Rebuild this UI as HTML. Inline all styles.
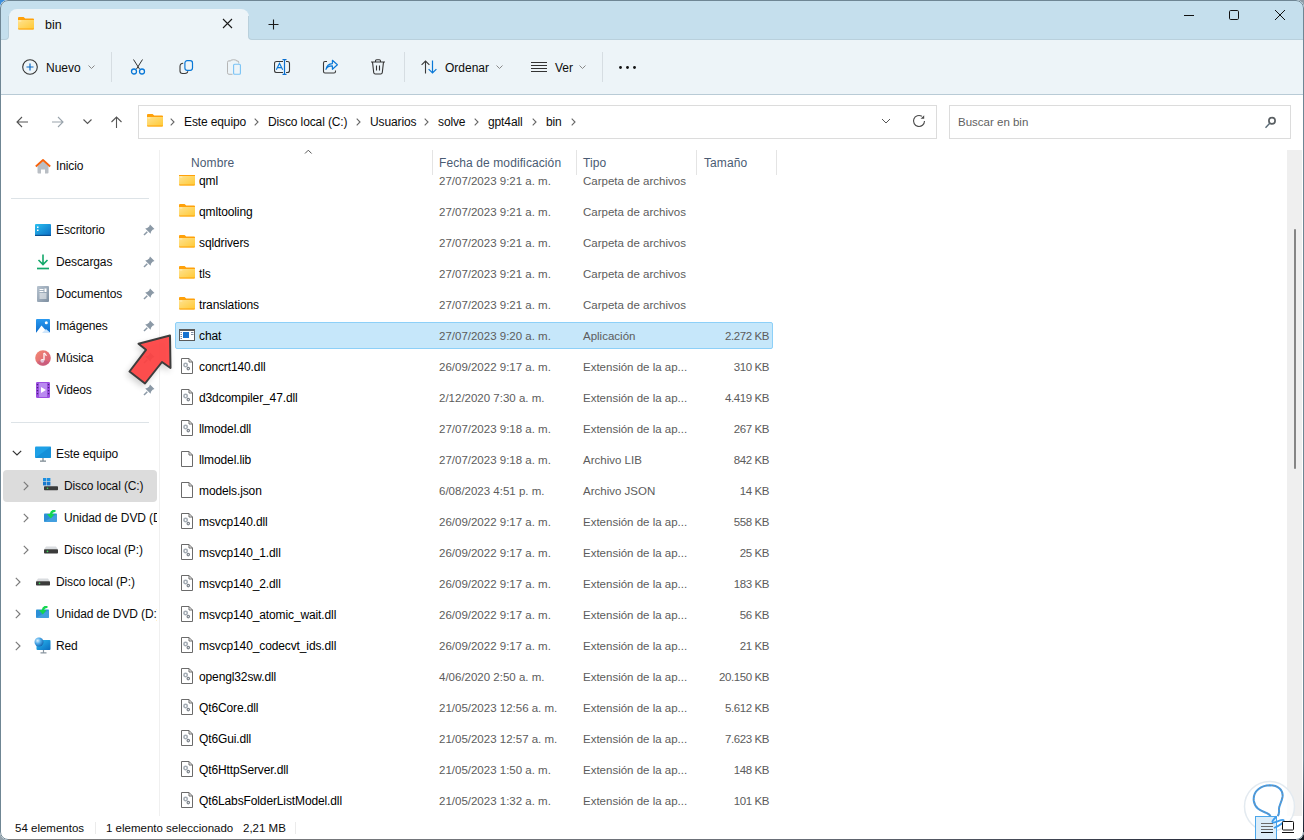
<!DOCTYPE html>
<html><head><meta charset="utf-8">
<style>
*{margin:0;padding:0;box-sizing:border-box}
html,body{width:1304px;height:840px;overflow:hidden;background:#2b4a78;font-family:"Liberation Sans",sans-serif;font-size:12px;color:#0c0c0c}
#win{position:absolute;left:0;top:0;width:1304px;height:840px;background:#fff;border-radius:8px;overflow:hidden}
#frame{position:absolute;left:0;top:0;width:1304px;height:840px;border:1px solid #6f8694;border-radius:8px;pointer-events:none}
.abs{position:absolute}
.t{position:absolute;line-height:16px;white-space:nowrap;font-size:12px;letter-spacing:-0.12px}
.gr{color:#5c5c5c;font-size:11.5px;letter-spacing:0}
.nm{color:#000}
.sz{text-align:right;letter-spacing:-0.42px}
.ic{position:absolute;line-height:0}
#title{position:absolute;left:0;top:0;width:1304px;height:40px;background:#c5dfed}
#tab{position:absolute;left:9px;top:9px;width:240px;height:32px;background:#edf4f8;border-radius:8px 8px 0 0}
#toolbar{position:absolute;left:0;top:40px;width:1304px;height:55px;background:#edf4f8;border-bottom:1px solid #b9cbd6}
.sep{position:absolute;width:1px;background:#d6dde2}
.box{position:absolute;border:1px solid #dcdcdc;background:#fff}
.hdr{color:#4a5b73;letter-spacing:0.1px}
.vdiv{position:absolute;width:1px;background:#e4e4e4}
</style></head><body>
<div class="abs" style="left:0;top:0;width:12px;height:12px;background:#3c8edb"></div>
<div class="abs" style="left:1292px;top:0;width:12px;height:12px;background:#8b9ba6"></div>
<div class="abs" style="left:0;top:828px;width:12px;height:12px;background:#94a3ad"></div>
<div class="abs" style="left:1292px;top:828px;width:12px;height:12px;background:#10151f"></div>
<div id="win">
  <div id="title"></div>
  <div class="abs" style="left:0;top:30px;width:260px;height:12px;background:#edf4f8"></div>
  <div id="tab"></div>
  <div class="abs" style="left:0;top:16px;width:9px;height:24px;background:#c5dfed;border-right:1px solid #b9d0dc;border-bottom:1px solid #b9d0dc;border-bottom-right-radius:4px"></div>
  <div class="abs" style="left:248px;top:16px;width:1056px;height:24px;background:#c5dfed;border-left:1px solid #b9d0dc;border-bottom:1px solid #b9d0dc;border-bottom-left-radius:4px"></div>
  <!-- tab contents -->
  <div class="ic" style="left:18px;top:16px">
    <svg width="16" height="14" viewBox="0 0 16 14"><path d="M0 2 Q0 1 1 1 H5.6 L7.2 2.4 H15 Q16 2.4 16 3.4 V5 H0Z" fill="#ffa10a"/><path d="M0 4 H16 V12.6 Q16 13.6 15 13.6 H1 Q0 13.6 0 12.6Z" fill="url(#fg)"/><path d="M0 12.6 H16 Q16 13.6 15 13.6 H1 Q0 13.6 0 12.6Z" fill="#ffa10a"/><rect x="0.8" y="4.6" width="2.5" height="0.8" fill="#fff3c8"/></svg>
  </div>
  <div class="t" style="left:45px;top:17px;font-size:12.5px;letter-spacing:0">bin</div>
  <svg class="abs" style="left:222px;top:18px" width="11" height="11" viewBox="0 0 11 11"><path d="M1 1L10 10M10 1L1 10" stroke="#1a1a1a" stroke-width="1.1"/></svg>
  <svg class="abs" style="left:268px;top:19px" width="11" height="11" viewBox="0 0 11 11"><path d="M5.5 0.5V10.5M0.5 5.5H10.5" stroke="#1a1a1a" stroke-width="1.1"/></svg>
  <!-- window controls -->
  <svg class="abs" style="left:1183px;top:14px" width="12" height="3"><path d="M1 1.5H11" stroke="#111" stroke-width="1"/></svg>
  <svg class="abs" style="left:1228px;top:9px" width="12" height="12"><rect x="1.5" y="1.5" width="9" height="9" rx="1.2" fill="none" stroke="#111" stroke-width="1"/></svg>
  <svg class="abs" style="left:1274px;top:9px" width="12" height="12"><path d="M1 1L11 11M11 1L1 11" stroke="#111" stroke-width="1"/></svg>

  <div id="toolbar"></div>
  
  <svg class="abs" style="left:22px;top:59px" width="16" height="16" viewBox="0 0 16 16"><circle cx="8" cy="8" r="7.3" fill="none" stroke="#333" stroke-width="1.1"/><path d="M8 4.5V11.5M4.5 8H11.5" stroke="#0a68c4" stroke-width="1.2"/></svg>
  <div class="t" style="left:46px;top:60px;letter-spacing:0">Nuevo</div>
  <svg class="abs" style="left:88px;top:65px" width="7" height="5"><path d="M0.5 0.5L3.5 3.5L6.5 0.5" stroke="#888" fill="none" stroke-width="1"/></svg>
  <div class="sep" style="left:111px;top:52px;height:30px"></div>
  <!-- cut -->
  <svg class="abs" style="left:130px;top:59px" width="16" height="16" viewBox="0 0 16 16"><path d="M3.5 0.5L9.5 10M12.5 0.5L6.5 10" stroke="#333" stroke-width="1" fill="none"/><circle cx="4" cy="12.5" r="2.5" fill="none" stroke="#0a78d7" stroke-width="1.3"/><circle cx="12" cy="12.5" r="2.5" fill="none" stroke="#0a78d7" stroke-width="1.3"/></svg>
  <!-- copy -->
  <svg class="abs" style="left:178px;top:59px" width="16" height="16" viewBox="0 0 16 16"><path d="M5.2 4.3Q2 4.5 2 7.5V12Q2 14.5 4.5 14.5H7Q9.5 14.5 9.8 12.3" fill="none" stroke="#3a3a3a" stroke-width="1.1"/><rect x="6.9" y="1.7" width="7.6" height="9.6" rx="2.2" fill="none" stroke="#0a78d7" stroke-width="1.2"/></svg>
  <!-- paste (disabled) -->
  <svg class="abs" style="left:226px;top:59px" width="16" height="16" viewBox="0 0 16 16"><path d="M4 1.8H3Q1.5 1.8 1.5 3.3V13.8Q1.5 15.3 3 15.3H6.5" fill="none" stroke="#b5b5b5" stroke-width="1"/><path d="M4 2.6Q4 0.7 7.6 0.7Q11.2 0.7 11.2 2.6" fill="none" stroke="#b5b5b5" stroke-width="1"/><path d="M11.2 1.8Q12.7 1.8 12.7 3.3V4.5" fill="none" stroke="#b5b5b5" stroke-width="1"/><rect x="7.6" y="5.2" width="6.8" height="10.1" rx="1" fill="none" stroke="#79c2f5" stroke-width="1.1"/></svg>
  <!-- rename -->
  <svg class="abs" style="left:274px;top:59px" width="17" height="16" viewBox="0 0 17 16"><path d="M9 2.5H2.5Q0.5 2.5 0.5 4.5V11.5Q0.5 13.5 2.5 13.5H9M12 2.5H13.5Q15.5 2.5 15.5 4.5V11.5Q15.5 13.5 13.5 13.5H12" fill="none" stroke="#3a3a3a" stroke-width="1.1"/><path d="M10.5 0.6V15.4M8.5 0.6H12.5M8.5 15.4H12.5" stroke="#0a6fd0" stroke-width="1.2" fill="none"/><path d="M2.3 10.8L5.5 4.3L8.7 10.8M3.4 8.6H7.6" stroke="#0a78d7" stroke-width="1.15" fill="none"/></svg>
  <!-- share -->
  <svg class="abs" style="left:322px;top:59px" width="17" height="16" viewBox="0 0 17 16"><path d="M5 2.5H3Q1.5 2.5 1.5 4V12.5Q1.5 14 3 14H12Q13.5 14 13.5 12.5V11.5" fill="none" stroke="#3a3a3a" stroke-width="1.1"/><path d="M4 10.4C5 7.6 7 6.9 10.4 6.9V10.3L15.4 5.8L10.4 1.3V4.6C6.5 4.8 4.5 7.5 4 10.4Z" fill="none" stroke="#0a78d7" stroke-width="1.15" stroke-linejoin="round"/></svg>
  <!-- delete -->
  <svg class="abs" style="left:370px;top:59px" width="16" height="16" viewBox="0 0 16 16"><path d="M1 3H15M5.5 3V2Q5.5 0.8 6.7 0.8H9.3Q10.5 0.8 10.5 2V3M2.5 3L3.7 13.5Q3.9 15 5.3 15H10.7Q12.1 15 12.3 13.5L13.5 3M6.5 6.5V11.5M9.5 6.5V11.5" fill="none" stroke="#333" stroke-width="1.1"/></svg>
  <div class="sep" style="left:404px;top:52px;height:30px"></div>
  <!-- sort -->
  <svg class="abs" style="left:421px;top:60px" width="17" height="14" viewBox="0 0 17 14"><path d="M4.5 13.5V1M0.6 4.9L4.5 1L8.4 4.9" fill="none" stroke="#3a3a3a" stroke-width="1.1"/><path d="M11.5 0.5V13M7.6 9.1L11.5 13L15.4 9.1" fill="none" stroke="#0a78d7" stroke-width="1.2"/></svg>
  <div class="t" style="left:445px;top:60px;letter-spacing:0">Ordenar</div>
  <svg class="abs" style="left:496px;top:65px" width="7" height="5"><path d="M0.5 0.5L3.5 3.5L6.5 0.5" stroke="#888" fill="none" stroke-width="1"/></svg>
  <!-- view -->
  <svg class="abs" style="left:531px;top:62px" width="16" height="10" viewBox="0 0 16 10"><path d="M0 0.5H16M0 3.5H16M0 6.5H16M0 9.5H16" stroke="#333" stroke-width="1"/></svg>
  <div class="t" style="left:555px;top:60px;letter-spacing:0">Ver</div>
  <svg class="abs" style="left:579px;top:65px" width="7" height="5"><path d="M0.5 0.5L3.5 3.5L6.5 0.5" stroke="#888" fill="none" stroke-width="1"/></svg>
  <div class="sep" style="left:602px;top:52px;height:30px"></div>
  <svg class="abs" style="left:619px;top:66px" width="17" height="3"><circle cx="1.5" cy="1.5" r="1.4" fill="#111"/><circle cx="8.5" cy="1.5" r="1.4" fill="#111"/><circle cx="15.5" cy="1.5" r="1.4" fill="#111"/></svg>


  <!-- address row -->
  
  <svg class="abs" style="left:16px;top:116px" width="13" height="12" viewBox="0 0 13 12"><path d="M12 6H1M6 1L1 6L6 11" fill="none" stroke="#555" stroke-width="1.1"/></svg>
  <svg class="abs" style="left:51px;top:116px" width="13" height="12" viewBox="0 0 13 12"><path d="M1 6H12M7 1L12 6L7 11" fill="none" stroke="#9aa4ac" stroke-width="1.1"/></svg>
  <svg class="abs" style="left:83px;top:119px" width="9" height="6" viewBox="0 0 9 6"><path d="M0.5 0.5L4.5 4.5L8.5 0.5" fill="none" stroke="#555" stroke-width="1.1"/></svg>
  <svg class="abs" style="left:111px;top:116px" width="11" height="12" viewBox="0 0 11 12"><path d="M5.5 12V1M0.5 6L5.5 1L10.5 6" fill="none" stroke="#555" stroke-width="1.1"/></svg>
  <div class="box" style="left:138px;top:105px;width:799px;height:34px"></div>
  <div class="ic" style="left:147px;top:113px">
    <svg width="16" height="14" viewBox="0 0 16 14"><path d="M0 2 Q0 1 1 1 H5.6 L7.2 2.4 H15 Q16 2.4 16 3.4 V5 H0Z" fill="#ffa10a"/><path d="M0 4 H16 V12.6 Q16 13.6 15 13.6 H1 Q0 13.6 0 12.6Z" fill="url(#fg)"/><path d="M0 12.6 H16 Q16 13.6 15 13.6 H1 Q0 13.6 0 12.6Z" fill="#ffa10a"/><rect x="0.8" y="4.6" width="2.5" height="0.8" fill="#fff3c8"/></svg>
  </div>
  <svg class="abs" style="left:170px;top:118px" width="5" height="8" viewBox="0 0 5 8"><path d="M0.7 0.7L4 4L0.7 7.3" fill="none" stroke="#666" stroke-width="1.1"/></svg>
<svg class="abs" style="left:254px;top:118px" width="5" height="8" viewBox="0 0 5 8"><path d="M0.7 0.7L4 4L0.7 7.3" fill="none" stroke="#666" stroke-width="1.1"/></svg>
<svg class="abs" style="left:356px;top:118px" width="5" height="8" viewBox="0 0 5 8"><path d="M0.7 0.7L4 4L0.7 7.3" fill="none" stroke="#666" stroke-width="1.1"/></svg>
<svg class="abs" style="left:424px;top:118px" width="5" height="8" viewBox="0 0 5 8"><path d="M0.7 0.7L4 4L0.7 7.3" fill="none" stroke="#666" stroke-width="1.1"/></svg>
<svg class="abs" style="left:474px;top:118px" width="5" height="8" viewBox="0 0 5 8"><path d="M0.7 0.7L4 4L0.7 7.3" fill="none" stroke="#666" stroke-width="1.1"/></svg>
<svg class="abs" style="left:532px;top:118px" width="5" height="8" viewBox="0 0 5 8"><path d="M0.7 0.7L4 4L0.7 7.3" fill="none" stroke="#666" stroke-width="1.1"/></svg>
<svg class="abs" style="left:571px;top:118px" width="5" height="8" viewBox="0 0 5 8"><path d="M0.7 0.7L4 4L0.7 7.3" fill="none" stroke="#666" stroke-width="1.1"/></svg>
<div class="t" style="left:184px;top:114px">Este equipo</div>
<div class="t" style="left:268px;top:114px">Disco local (C:)</div>
<div class="t" style="left:370px;top:114px">Usuarios</div>
<div class="t" style="left:438px;top:114px">solve</div>
<div class="t" style="left:488px;top:114px">gpt4all</div>
<div class="t" style="left:546px;top:114px">bin</div>
  <svg class="abs" style="left:881px;top:118px" width="10" height="6" viewBox="0 0 10 6"><path d="M1 1L5 5L9 1" fill="none" stroke="#555" stroke-width="1"/></svg>
  <svg class="abs" style="left:912px;top:114px" width="14" height="14" viewBox="0 0 14 14"><path d="M12.5 7A5.5 5.5 0 1 1 9.9 2.3" fill="none" stroke="#4a4a4a" stroke-width="1.1"/><path d="M8.6 4.8H12.2V1.2Z" fill="#4a4a4a"/></svg>
  <div class="box" style="left:949px;top:105px;width:342px;height:34px"></div>
  <div class="t" style="left:958px;top:114px;color:#5f5f5f;font-size:11.5px;letter-spacing:0">Buscar en bin</div>
  <svg class="abs" style="left:1264px;top:116px" width="13" height="13" viewBox="0 0 13 13"><circle cx="8" cy="4.8" r="3.1" fill="none" stroke="#5a5f63" stroke-width="1.7"/><path d="M5.8 7.2L1.5 11.7" stroke="#5a6a76" stroke-width="1.4"/></svg>


  <!-- nav pane -->
  <svg class="abs" style="left:35px;top:159px" width="16" height="15" viewBox="0 0 16 15"><path d="M2.5 7V13.5Q2.5 14.5 3.5 14.5H6V10.5H10V14.5H12.5Q13.5 14.5 13.5 13.5V7L8 2Z" fill="#b9bec4"/><path d="M0.8 7.5L8 1L15.2 7.5" fill="none" stroke="#f7630c" stroke-width="1.8" stroke-linejoin="round"/></svg>
<div class="t" style="left:56px;top:158px">Inicio</div>
<div class="abs" style="left:11px;top:198px;width:138px;height:1px;background:#dde3e7"></div>
<div class="ic" style="left:35px;top:224px"><svg width="16" height="12" viewBox="0 0 16 12"><defs><linearGradient id="dk" x1="0" y1="0" x2="1" y2="1"><stop offset="0" stop-color="#2bc0f0"/><stop offset="1" stop-color="#0b6cc4"/></linearGradient></defs><rect x="0" y="0" width="16" height="12" rx="1" fill="url(#dk)"/><rect x="2" y="2.5" width="1.5" height="1.5" fill="#fff"/><rect x="2" y="5.5" width="1.5" height="1.5" fill="#fff"/><rect x="0" y="10.8" width="16" height="1.2" fill="#0a4f92"/></svg></div>
<div class="t" style="left:56px;top:222px">Escritorio</div>
<svg class="abs" style="left:143px;top:224px" width="12" height="12" viewBox="0 0 12 12"><path d="M7 0.5L11.5 5L9.6 5.8L8 7.8L7.6 9.8L2.2 4.4L4.2 4L6.2 2.4Z" fill="#8b99a6"/><path d="M4.3 7.7L1 11" stroke="#8b99a6" stroke-width="1.5"/></svg>
<div class="ic" style="left:36px;top:254px"><svg width="14" height="16" viewBox="0 0 14 16"><path d="M7 0.5V10.5M2.5 6L7 10.5L11.5 6" fill="none" stroke="#13a86a" stroke-width="1.6"/><path d="M1 14.5H13" stroke="#13a86a" stroke-width="1.7"/></svg></div>
<div class="t" style="left:56px;top:254px">Descargas</div>
<svg class="abs" style="left:143px;top:256px" width="12" height="12" viewBox="0 0 12 12"><path d="M7 0.5L11.5 5L9.6 5.8L8 7.8L7.6 9.8L2.2 4.4L4.2 4L6.2 2.4Z" fill="#8b99a6"/><path d="M4.3 7.7L1 11" stroke="#8b99a6" stroke-width="1.5"/></svg>
<div class="ic" style="left:37px;top:286px"><svg width="12" height="16" viewBox="0 0 12 16"><defs><linearGradient id="dc" x1="0" y1="0" x2="1" y2="1"><stop offset="0" stop-color="#b8c4d0"/><stop offset="1" stop-color="#7d8ea0"/></linearGradient></defs><rect x="0" y="0" width="12" height="16" rx="1" fill="url(#dc)"/><path d="M2.5 3.5H6.5M2.5 5.5H6.5M2.5 8H9.5M2.5 10H9.5M2.5 12H9.5" stroke="#fff" stroke-width="1"/><rect x="7.5" y="2.5" width="2" height="3.5" fill="#fff"/></svg></div>
<div class="t" style="left:56px;top:286px">Documentos</div>
<svg class="abs" style="left:143px;top:288px" width="12" height="12" viewBox="0 0 12 12"><path d="M7 0.5L11.5 5L9.6 5.8L8 7.8L7.6 9.8L2.2 4.4L4.2 4L6.2 2.4Z" fill="#8b99a6"/><path d="M4.3 7.7L1 11" stroke="#8b99a6" stroke-width="1.5"/></svg>
<div class="ic" style="left:36px;top:319px"><svg width="14" height="14" viewBox="0 0 14 14"><defs><linearGradient id="im" x1="0" y1="0" x2="0" y2="1"><stop offset="0" stop-color="#2a9af0"/><stop offset="1" stop-color="#0c6ccc"/></linearGradient></defs><rect x="0" y="0" width="14" height="14" rx="1" fill="url(#im)"/><path d="M0 14L5.5 6.5L12 14Z" fill="#fff"/><path d="M6 14L10 10L14 13.5V14Z" fill="#cfe6fb"/><circle cx="10.3" cy="3.7" r="1.5" fill="#fff"/></svg></div>
<div class="t" style="left:56px;top:318px">Imágenes</div>
<svg class="abs" style="left:143px;top:320px" width="12" height="12" viewBox="0 0 12 12"><path d="M7 0.5L11.5 5L9.6 5.8L8 7.8L7.6 9.8L2.2 4.4L4.2 4L6.2 2.4Z" fill="#8b99a6"/><path d="M4.3 7.7L1 11" stroke="#8b99a6" stroke-width="1.5"/></svg>
<div class="ic" style="left:35px;top:350px"><svg width="16" height="16" viewBox="0 0 16 16"><defs><linearGradient id="mu" x1="0" y1="0" x2="1" y2="1"><stop offset="0" stop-color="#f48a72"/><stop offset="1" stop-color="#d45a78"/></linearGradient></defs><circle cx="8" cy="8" r="7.8" fill="url(#mu)"/><path d="M9 3V10.5" stroke="#fff" stroke-width="1.3"/><circle cx="7.3" cy="10.8" r="1.9" fill="#fff"/><path d="M9 3Q11 4 11.3 6" stroke="#fff" stroke-width="1.1" fill="none"/><path d="M2 12Q8 8 14 12Q11 16 8 15.8Q4 15.5 2 12Z" fill="#a94a8a" opacity="0.35"/></svg></div>
<div class="t" style="left:56px;top:350px">Música</div>
<svg class="abs" style="left:143px;top:352px" width="12" height="12" viewBox="0 0 12 12"><path d="M7 0.5L11.5 5L9.6 5.8L8 7.8L7.6 9.8L2.2 4.4L4.2 4L6.2 2.4Z" fill="#8b99a6"/><path d="M4.3 7.7L1 11" stroke="#8b99a6" stroke-width="1.5"/></svg>
<div class="ic" style="left:36px;top:382px"><svg width="14" height="16" viewBox="0 0 14 16"><rect x="0" y="0" width="14" height="16" rx="1.2" fill="#9b4fe0"/><rect x="3" y="1" width="8" height="14" fill="#b98af0"/><path d="M5 5V11L10 8Z" fill="#fff"/><path d="M1.5 2V14M12.5 2V14" stroke="#4a1f80" stroke-width="1.3" stroke-dasharray="1.3 1.7"/></svg></div>
<div class="t" style="left:56px;top:382px">Videos</div>
<svg class="abs" style="left:143px;top:384px" width="12" height="12" viewBox="0 0 12 12"><path d="M7 0.5L11.5 5L9.6 5.8L8 7.8L7.6 9.8L2.2 4.4L4.2 4L6.2 2.4Z" fill="#8b99a6"/><path d="M4.3 7.7L1 11" stroke="#8b99a6" stroke-width="1.5"/></svg>
<div class="abs" style="left:11px;top:422px;width:138px;height:1px;background:#dde3e7"></div>
<div class="abs" style="left:3px;top:470px;width:154px;height:32px;background:#dcdcdc;border-radius:4px"></div>
<svg class="abs" style="left:12px;top:450px" width="10" height="6" viewBox="0 0 10 6"><path d="M0.8 0.8L5 5L9.2 0.8" fill="none" stroke="#333" stroke-width="1.2"/></svg>
<div class="ic" style="left:35px;top:446px"><svg width="16" height="16" viewBox="0 0 16 16"><rect x="0" y="0.5" width="16" height="11.5" rx="1" fill="#1ea0e6"/><path d="M0 12L16 0.5V12Z" fill="#1186d0" opacity="0.6"/><path d="M8 12V15M5 15.2H11" stroke="#7a8790" stroke-width="1.2"/></svg></div>
<div class="t" style="left:56px;top:446px">Este equipo</div>
<svg class="abs" style="left:23px;top:481px" width="6" height="10" viewBox="0 0 6 10"><path d="M0.8 0.8L5 5L0.8 9.2" fill="none" stroke="#7a7a7a" stroke-width="1.15"/></svg>
<div class="ic" style="left:43px;top:478px"><svg width="16" height="13" viewBox="0 0 16 13"><path d="M3 5.5H13L15 8.5H1Z" fill="#d9dcdf"/><rect x="1" y="8.3" width="14" height="4" rx="0.8" fill="#3b3b3b"/><circle cx="4.5" cy="10.3" r="0.8" fill="#3cdc5a"/><rect x="0" y="0" width="3.4" height="3.4" fill="#1c8fe0"/><rect x="4" y="0" width="3.4" height="3.4" fill="#1c8fe0"/><rect x="0" y="4" width="3.4" height="3.4" fill="#1878cf"/><rect x="4" y="4" width="3.4" height="3.4" fill="#1878cf"/></svg></div>
<div class="t" style="left:64px;top:478px;width:93px;overflow:hidden">Disco local (C:)</div>
<svg class="abs" style="left:23px;top:513px" width="6" height="10" viewBox="0 0 6 10"><path d="M0.8 0.8L5 5L0.8 9.2" fill="none" stroke="#7a7a7a" stroke-width="1.15"/></svg>
<div class="ic" style="left:44px;top:510px"><svg width="13" height="12" viewBox="0 0 13 12"><rect x="0" y="3.5" width="13" height="8.5" rx="0.8" fill="#2b8fd6"/><path d="M0 12L13 4V12Z" fill="#5ab0e8" opacity="0.5"/><path d="M11.5 0.8Q7.5 0.5 6.8 4.5" fill="none" stroke="#14d650" stroke-width="2.4"/><path d="M3 4H10.5L6.8 8.5Z" fill="#14d650"/></svg></div>
<div class="t" style="left:64px;top:510px;width:93px;overflow:hidden">Unidad de DVD (D:)</div>
<svg class="abs" style="left:23px;top:545px" width="6" height="10" viewBox="0 0 6 10"><path d="M0.8 0.8L5 5L0.8 9.2" fill="none" stroke="#7a7a7a" stroke-width="1.15"/></svg>
<div class="ic" style="left:44px;top:546px"><svg width="14" height="8" viewBox="0 0 14 8"><path d="M2 0.5H12L14 3.5H0Z" fill="#d9dcdf"/><rect x="0" y="3.3" width="14" height="4.2" rx="0.8" fill="#3b3b3b"/><circle cx="3.5" cy="5.4" r="0.8" fill="#3cdc5a"/></svg></div>
<div class="t" style="left:64px;top:542px;width:93px;overflow:hidden">Disco local (P:)</div>
<svg class="abs" style="left:15px;top:577px" width="6" height="10" viewBox="0 0 6 10"><path d="M0.8 0.8L5 5L0.8 9.2" fill="none" stroke="#7a7a7a" stroke-width="1.15"/></svg>
<div class="ic" style="left:36px;top:578px"><svg width="14" height="8" viewBox="0 0 14 8"><path d="M2 0.5H12L14 3.5H0Z" fill="#d9dcdf"/><rect x="0" y="3.3" width="14" height="4.2" rx="0.8" fill="#3b3b3b"/><circle cx="3.5" cy="5.4" r="0.8" fill="#3cdc5a"/></svg></div>
<div class="t" style="left:56px;top:574px;width:101px;overflow:hidden">Disco local (P:)</div>
<svg class="abs" style="left:15px;top:609px" width="6" height="10" viewBox="0 0 6 10"><path d="M0.8 0.8L5 5L0.8 9.2" fill="none" stroke="#7a7a7a" stroke-width="1.15"/></svg>
<div class="ic" style="left:36px;top:606px"><svg width="13" height="12" viewBox="0 0 13 12"><rect x="0" y="3.5" width="13" height="8.5" rx="0.8" fill="#2b8fd6"/><path d="M0 12L13 4V12Z" fill="#5ab0e8" opacity="0.5"/><path d="M11.5 0.8Q7.5 0.5 6.8 4.5" fill="none" stroke="#14d650" stroke-width="2.4"/><path d="M3 4H10.5L6.8 8.5Z" fill="#14d650"/></svg></div>
<div class="t" style="left:56px;top:606px;width:101px;overflow:hidden">Unidad de DVD (D:)</div>
<svg class="abs" style="left:15px;top:641px" width="6" height="10" viewBox="0 0 6 10"><path d="M0.8 0.8L5 5L0.8 9.2" fill="none" stroke="#7a7a7a" stroke-width="1.15"/></svg>
<div class="ic" style="left:34px;top:637px"><svg width="17" height="17" viewBox="0 0 17 17"><defs><linearGradient id="nm" x1="0" y1="0" x2="1" y2="1"><stop offset="0" stop-color="#2bbdf0"/><stop offset="1" stop-color="#0a6cc0"/></linearGradient><radialGradient id="gl" cx="0.35" cy="0.35" r="0.7"><stop offset="0" stop-color="#d8f0ff"/><stop offset="0.5" stop-color="#4aa8e8"/><stop offset="1" stop-color="#1766b0"/></radialGradient></defs><rect x="2.5" y="3" width="14" height="10" rx="1" fill="url(#nm)"/><path d="M9.5 13V15.5M6.5 15.8H12.5" stroke="#8a96a0" stroke-width="1.2"/><circle cx="5" cy="5" r="4.5" fill="url(#gl)"/></svg></div>
<div class="t" style="left:56px;top:638px;width:101px;overflow:hidden">Red</div>
  <div class="vdiv" style="left:159px;top:150px;height:666px;background:#f0f0f0"></div>

  <!-- header -->
  <div class="t hdr" style="left:191px;top:155px">Nombre</div>
  <svg class="abs" style="left:303px;top:149px" width="10" height="6"><path d="M2 4.5L5.3 1.2L8.6 4.5" stroke="#555" fill="none" stroke-width="1"/></svg>
  <div class="vdiv" style="left:432px;top:150px;height:25px"></div>
  <div class="t hdr" style="left:439px;top:155px">Fecha de modificación</div>
  <div class="vdiv" style="left:576px;top:150px;height:25px"></div>
  <div class="t hdr" style="left:583px;top:155px">Tipo</div>
  <div class="vdiv" style="left:696px;top:150px;height:25px"></div>
  <div class="t hdr" style="left:704px;top:155px">Tamaño</div>
  <div class="vdiv" style="left:776px;top:150px;height:25px"></div>

  <!-- list -->
  <div class="abs" style="left:160px;top:175px;width:1126px;height:642px;overflow:hidden">
    <div class="abs" style="left:-160px;top:-175px;width:1304px;height:840px">
      <div class="abs" style="left:175px;top:322px;width:598px;height:27px;background:#c6e7fa;border:1px solid #8dd0f8;border-radius:2px"></div>
      <div class="ic" style="left:179px;top:172px"><svg width="16" height="14" viewBox="0 0 16 14"><defs><linearGradient id="fg" x1="0" y1="0" x2="1" y2="1"><stop offset="0" stop-color="#ffe28f"/><stop offset="1" stop-color="#ffc933"/></linearGradient></defs><path d="M0 2 Q0 1 1 1 H5.6 L7.2 2.4 H15 Q16 2.4 16 3.4 V5 H0Z" fill="#ffa10a"/><path d="M0 4 H16 V12.6 Q16 13.6 15 13.6 H1 Q0 13.6 0 12.6Z" fill="url(#fg)"/><path d="M0 12.6 H16 Q16 13.6 15 13.6 H1 Q0 13.6 0 12.6Z" fill="#ffa10a"/><rect x="0.8" y="4.6" width="2.5" height="0.8" fill="#fff3c8"/></svg></div>
<div class="t nm" style="left:199px;top:173px">qml</div>
<div class="t gr" style="left:439px;top:173px">27/07/2023 9:21 a. m.</div>
<div class="t gr" style="left:583px;top:173px">Carpeta de archivos</div>
<div class="ic" style="left:179px;top:203px"><svg width="16" height="14" viewBox="0 0 16 14"><defs><linearGradient id="fg" x1="0" y1="0" x2="1" y2="1"><stop offset="0" stop-color="#ffe28f"/><stop offset="1" stop-color="#ffc933"/></linearGradient></defs><path d="M0 2 Q0 1 1 1 H5.6 L7.2 2.4 H15 Q16 2.4 16 3.4 V5 H0Z" fill="#ffa10a"/><path d="M0 4 H16 V12.6 Q16 13.6 15 13.6 H1 Q0 13.6 0 12.6Z" fill="url(#fg)"/><path d="M0 12.6 H16 Q16 13.6 15 13.6 H1 Q0 13.6 0 12.6Z" fill="#ffa10a"/><rect x="0.8" y="4.6" width="2.5" height="0.8" fill="#fff3c8"/></svg></div>
<div class="t nm" style="left:199px;top:204px">qmltooling</div>
<div class="t gr" style="left:439px;top:204px">27/07/2023 9:21 a. m.</div>
<div class="t gr" style="left:583px;top:204px">Carpeta de archivos</div>
<div class="ic" style="left:179px;top:234px"><svg width="16" height="14" viewBox="0 0 16 14"><defs><linearGradient id="fg" x1="0" y1="0" x2="1" y2="1"><stop offset="0" stop-color="#ffe28f"/><stop offset="1" stop-color="#ffc933"/></linearGradient></defs><path d="M0 2 Q0 1 1 1 H5.6 L7.2 2.4 H15 Q16 2.4 16 3.4 V5 H0Z" fill="#ffa10a"/><path d="M0 4 H16 V12.6 Q16 13.6 15 13.6 H1 Q0 13.6 0 12.6Z" fill="url(#fg)"/><path d="M0 12.6 H16 Q16 13.6 15 13.6 H1 Q0 13.6 0 12.6Z" fill="#ffa10a"/><rect x="0.8" y="4.6" width="2.5" height="0.8" fill="#fff3c8"/></svg></div>
<div class="t nm" style="left:199px;top:235px">sqldrivers</div>
<div class="t gr" style="left:439px;top:235px">27/07/2023 9:21 a. m.</div>
<div class="t gr" style="left:583px;top:235px">Carpeta de archivos</div>
<div class="ic" style="left:179px;top:265px"><svg width="16" height="14" viewBox="0 0 16 14"><defs><linearGradient id="fg" x1="0" y1="0" x2="1" y2="1"><stop offset="0" stop-color="#ffe28f"/><stop offset="1" stop-color="#ffc933"/></linearGradient></defs><path d="M0 2 Q0 1 1 1 H5.6 L7.2 2.4 H15 Q16 2.4 16 3.4 V5 H0Z" fill="#ffa10a"/><path d="M0 4 H16 V12.6 Q16 13.6 15 13.6 H1 Q0 13.6 0 12.6Z" fill="url(#fg)"/><path d="M0 12.6 H16 Q16 13.6 15 13.6 H1 Q0 13.6 0 12.6Z" fill="#ffa10a"/><rect x="0.8" y="4.6" width="2.5" height="0.8" fill="#fff3c8"/></svg></div>
<div class="t nm" style="left:199px;top:266px">tls</div>
<div class="t gr" style="left:439px;top:266px">27/07/2023 9:21 a. m.</div>
<div class="t gr" style="left:583px;top:266px">Carpeta de archivos</div>
<div class="ic" style="left:179px;top:296px"><svg width="16" height="14" viewBox="0 0 16 14"><defs><linearGradient id="fg" x1="0" y1="0" x2="1" y2="1"><stop offset="0" stop-color="#ffe28f"/><stop offset="1" stop-color="#ffc933"/></linearGradient></defs><path d="M0 2 Q0 1 1 1 H5.6 L7.2 2.4 H15 Q16 2.4 16 3.4 V5 H0Z" fill="#ffa10a"/><path d="M0 4 H16 V12.6 Q16 13.6 15 13.6 H1 Q0 13.6 0 12.6Z" fill="url(#fg)"/><path d="M0 12.6 H16 Q16 13.6 15 13.6 H1 Q0 13.6 0 12.6Z" fill="#ffa10a"/><rect x="0.8" y="4.6" width="2.5" height="0.8" fill="#fff3c8"/></svg></div>
<div class="t nm" style="left:199px;top:297px">translations</div>
<div class="t gr" style="left:439px;top:297px">27/07/2023 9:21 a. m.</div>
<div class="t gr" style="left:583px;top:297px">Carpeta de archivos</div>
<div class="ic" style="left:179px;top:329px"><svg width="16" height="12" viewBox="0 0 16 12"><rect x="0.5" y="0.5" width="15" height="11" fill="#fff" stroke="#5a5a5a"/><rect x="0.5" y="0.5" width="15" height="1.5" fill="#5a5a5a"/><rect x="4" y="3" width="6" height="6" fill="#1572d0"/><path d="M1.5 3.5h1.5M1.5 5.5h1.5M1.5 7.5h1.5M1.5 9.5h1.5M12 3.5h2.5M12 5.5h2.5" stroke="#7b8aa0" stroke-width="1"/></svg></div>
<div class="t nm" style="left:199px;top:328px">chat</div>
<div class="t gr" style="left:439px;top:328px">27/07/2023 9:20 a. m.</div>
<div class="t gr" style="left:583px;top:328px">Aplicación</div>
<div class="t gr sz" style="right:535px;top:328px">2.272 KB</div>
<div class="ic" style="left:181px;top:358px"><svg width="13" height="16" viewBox="0 0 13 16"><path d="M0.5 0.5 H8 L11.5 4 V15.5 H0.5Z" fill="#fff" stroke="#6b6b6b"/><path d="M8 0.5 V4 H11.5" fill="none" stroke="#6b6b6b"/><circle cx="4.6" cy="7" r="1.7" fill="none" stroke="#a3abb3" stroke-width="1.5"/><circle cx="7.3" cy="10.6" r="1.2" fill="none" stroke="#7d848c" stroke-width="1.2"/></svg></div>
<div class="t nm" style="left:199px;top:359px">concrt140.dll</div>
<div class="t gr" style="left:439px;top:359px">26/09/2022 9:17 a. m.</div>
<div class="t gr" style="left:583px;top:359px">Extensión de la ap...</div>
<div class="t gr sz" style="right:535px;top:359px">310 KB</div>
<div class="ic" style="left:181px;top:389px"><svg width="13" height="16" viewBox="0 0 13 16"><path d="M0.5 0.5 H8 L11.5 4 V15.5 H0.5Z" fill="#fff" stroke="#6b6b6b"/><path d="M8 0.5 V4 H11.5" fill="none" stroke="#6b6b6b"/><circle cx="4.6" cy="7" r="1.7" fill="none" stroke="#a3abb3" stroke-width="1.5"/><circle cx="7.3" cy="10.6" r="1.2" fill="none" stroke="#7d848c" stroke-width="1.2"/></svg></div>
<div class="t nm" style="left:199px;top:390px">d3dcompiler_47.dll</div>
<div class="t gr" style="left:439px;top:390px">2/12/2020 7:30 a. m.</div>
<div class="t gr" style="left:583px;top:390px">Extensión de la ap...</div>
<div class="t gr sz" style="right:535px;top:390px">4.419 KB</div>
<div class="ic" style="left:181px;top:420px"><svg width="13" height="16" viewBox="0 0 13 16"><path d="M0.5 0.5 H8 L11.5 4 V15.5 H0.5Z" fill="#fff" stroke="#6b6b6b"/><path d="M8 0.5 V4 H11.5" fill="none" stroke="#6b6b6b"/><circle cx="4.6" cy="7" r="1.7" fill="none" stroke="#a3abb3" stroke-width="1.5"/><circle cx="7.3" cy="10.6" r="1.2" fill="none" stroke="#7d848c" stroke-width="1.2"/></svg></div>
<div class="t nm" style="left:199px;top:421px">llmodel.dll</div>
<div class="t gr" style="left:439px;top:421px">27/07/2023 9:18 a. m.</div>
<div class="t gr" style="left:583px;top:421px">Extensión de la ap...</div>
<div class="t gr sz" style="right:535px;top:421px">267 KB</div>
<div class="ic" style="left:181px;top:451px"><svg width="13" height="16" viewBox="0 0 13 16"><path d="M0.5 0.5 H8 L11.5 4 V15.5 H0.5Z" fill="#fff" stroke="#6b6b6b"/><path d="M8 0.5 V4 H11.5" fill="none" stroke="#6b6b6b"/></svg></div>
<div class="t nm" style="left:199px;top:452px">llmodel.lib</div>
<div class="t gr" style="left:439px;top:452px">27/07/2023 9:18 a. m.</div>
<div class="t gr" style="left:583px;top:452px">Archivo LIB</div>
<div class="t gr sz" style="right:535px;top:452px">842 KB</div>
<div class="ic" style="left:181px;top:482px"><svg width="13" height="16" viewBox="0 0 13 16"><path d="M0.5 0.5 H8 L11.5 4 V15.5 H0.5Z" fill="#fff" stroke="#6b6b6b"/><path d="M8 0.5 V4 H11.5" fill="none" stroke="#6b6b6b"/></svg></div>
<div class="t nm" style="left:199px;top:483px">models.json</div>
<div class="t gr" style="left:439px;top:483px">6/08/2023 4:51 p. m.</div>
<div class="t gr" style="left:583px;top:483px">Archivo JSON</div>
<div class="t gr sz" style="right:535px;top:483px">14 KB</div>
<div class="ic" style="left:181px;top:513px"><svg width="13" height="16" viewBox="0 0 13 16"><path d="M0.5 0.5 H8 L11.5 4 V15.5 H0.5Z" fill="#fff" stroke="#6b6b6b"/><path d="M8 0.5 V4 H11.5" fill="none" stroke="#6b6b6b"/><circle cx="4.6" cy="7" r="1.7" fill="none" stroke="#a3abb3" stroke-width="1.5"/><circle cx="7.3" cy="10.6" r="1.2" fill="none" stroke="#7d848c" stroke-width="1.2"/></svg></div>
<div class="t nm" style="left:199px;top:514px">msvcp140.dll</div>
<div class="t gr" style="left:439px;top:514px">26/09/2022 9:17 a. m.</div>
<div class="t gr" style="left:583px;top:514px">Extensión de la ap...</div>
<div class="t gr sz" style="right:535px;top:514px">558 KB</div>
<div class="ic" style="left:181px;top:544px"><svg width="13" height="16" viewBox="0 0 13 16"><path d="M0.5 0.5 H8 L11.5 4 V15.5 H0.5Z" fill="#fff" stroke="#6b6b6b"/><path d="M8 0.5 V4 H11.5" fill="none" stroke="#6b6b6b"/><circle cx="4.6" cy="7" r="1.7" fill="none" stroke="#a3abb3" stroke-width="1.5"/><circle cx="7.3" cy="10.6" r="1.2" fill="none" stroke="#7d848c" stroke-width="1.2"/></svg></div>
<div class="t nm" style="left:199px;top:545px">msvcp140_1.dll</div>
<div class="t gr" style="left:439px;top:545px">26/09/2022 9:17 a. m.</div>
<div class="t gr" style="left:583px;top:545px">Extensión de la ap...</div>
<div class="t gr sz" style="right:535px;top:545px">25 KB</div>
<div class="ic" style="left:181px;top:575px"><svg width="13" height="16" viewBox="0 0 13 16"><path d="M0.5 0.5 H8 L11.5 4 V15.5 H0.5Z" fill="#fff" stroke="#6b6b6b"/><path d="M8 0.5 V4 H11.5" fill="none" stroke="#6b6b6b"/><circle cx="4.6" cy="7" r="1.7" fill="none" stroke="#a3abb3" stroke-width="1.5"/><circle cx="7.3" cy="10.6" r="1.2" fill="none" stroke="#7d848c" stroke-width="1.2"/></svg></div>
<div class="t nm" style="left:199px;top:576px">msvcp140_2.dll</div>
<div class="t gr" style="left:439px;top:576px">26/09/2022 9:17 a. m.</div>
<div class="t gr" style="left:583px;top:576px">Extensión de la ap...</div>
<div class="t gr sz" style="right:535px;top:576px">183 KB</div>
<div class="ic" style="left:181px;top:606px"><svg width="13" height="16" viewBox="0 0 13 16"><path d="M0.5 0.5 H8 L11.5 4 V15.5 H0.5Z" fill="#fff" stroke="#6b6b6b"/><path d="M8 0.5 V4 H11.5" fill="none" stroke="#6b6b6b"/><circle cx="4.6" cy="7" r="1.7" fill="none" stroke="#a3abb3" stroke-width="1.5"/><circle cx="7.3" cy="10.6" r="1.2" fill="none" stroke="#7d848c" stroke-width="1.2"/></svg></div>
<div class="t nm" style="left:199px;top:607px">msvcp140_atomic_wait.dll</div>
<div class="t gr" style="left:439px;top:607px">26/09/2022 9:17 a. m.</div>
<div class="t gr" style="left:583px;top:607px">Extensión de la ap...</div>
<div class="t gr sz" style="right:535px;top:607px">56 KB</div>
<div class="ic" style="left:181px;top:637px"><svg width="13" height="16" viewBox="0 0 13 16"><path d="M0.5 0.5 H8 L11.5 4 V15.5 H0.5Z" fill="#fff" stroke="#6b6b6b"/><path d="M8 0.5 V4 H11.5" fill="none" stroke="#6b6b6b"/><circle cx="4.6" cy="7" r="1.7" fill="none" stroke="#a3abb3" stroke-width="1.5"/><circle cx="7.3" cy="10.6" r="1.2" fill="none" stroke="#7d848c" stroke-width="1.2"/></svg></div>
<div class="t nm" style="left:199px;top:638px">msvcp140_codecvt_ids.dll</div>
<div class="t gr" style="left:439px;top:638px">26/09/2022 9:17 a. m.</div>
<div class="t gr" style="left:583px;top:638px">Extensión de la ap...</div>
<div class="t gr sz" style="right:535px;top:638px">21 KB</div>
<div class="ic" style="left:181px;top:668px"><svg width="13" height="16" viewBox="0 0 13 16"><path d="M0.5 0.5 H8 L11.5 4 V15.5 H0.5Z" fill="#fff" stroke="#6b6b6b"/><path d="M8 0.5 V4 H11.5" fill="none" stroke="#6b6b6b"/><circle cx="4.6" cy="7" r="1.7" fill="none" stroke="#a3abb3" stroke-width="1.5"/><circle cx="7.3" cy="10.6" r="1.2" fill="none" stroke="#7d848c" stroke-width="1.2"/></svg></div>
<div class="t nm" style="left:199px;top:669px">opengl32sw.dll</div>
<div class="t gr" style="left:439px;top:669px">4/06/2020 2:50 a. m.</div>
<div class="t gr" style="left:583px;top:669px">Extensión de la ap...</div>
<div class="t gr sz" style="right:535px;top:669px">20.150 KB</div>
<div class="ic" style="left:181px;top:699px"><svg width="13" height="16" viewBox="0 0 13 16"><path d="M0.5 0.5 H8 L11.5 4 V15.5 H0.5Z" fill="#fff" stroke="#6b6b6b"/><path d="M8 0.5 V4 H11.5" fill="none" stroke="#6b6b6b"/><circle cx="4.6" cy="7" r="1.7" fill="none" stroke="#a3abb3" stroke-width="1.5"/><circle cx="7.3" cy="10.6" r="1.2" fill="none" stroke="#7d848c" stroke-width="1.2"/></svg></div>
<div class="t nm" style="left:199px;top:700px">Qt6Core.dll</div>
<div class="t gr" style="left:439px;top:700px">21/05/2023 12:56 a. m.</div>
<div class="t gr" style="left:583px;top:700px">Extensión de la ap...</div>
<div class="t gr sz" style="right:535px;top:700px">5.612 KB</div>
<div class="ic" style="left:181px;top:730px"><svg width="13" height="16" viewBox="0 0 13 16"><path d="M0.5 0.5 H8 L11.5 4 V15.5 H0.5Z" fill="#fff" stroke="#6b6b6b"/><path d="M8 0.5 V4 H11.5" fill="none" stroke="#6b6b6b"/><circle cx="4.6" cy="7" r="1.7" fill="none" stroke="#a3abb3" stroke-width="1.5"/><circle cx="7.3" cy="10.6" r="1.2" fill="none" stroke="#7d848c" stroke-width="1.2"/></svg></div>
<div class="t nm" style="left:199px;top:731px">Qt6Gui.dll</div>
<div class="t gr" style="left:439px;top:731px">21/05/2023 12:57 a. m.</div>
<div class="t gr" style="left:583px;top:731px">Extensión de la ap...</div>
<div class="t gr sz" style="right:535px;top:731px">7.623 KB</div>
<div class="ic" style="left:181px;top:761px"><svg width="13" height="16" viewBox="0 0 13 16"><path d="M0.5 0.5 H8 L11.5 4 V15.5 H0.5Z" fill="#fff" stroke="#6b6b6b"/><path d="M8 0.5 V4 H11.5" fill="none" stroke="#6b6b6b"/><circle cx="4.6" cy="7" r="1.7" fill="none" stroke="#a3abb3" stroke-width="1.5"/><circle cx="7.3" cy="10.6" r="1.2" fill="none" stroke="#7d848c" stroke-width="1.2"/></svg></div>
<div class="t nm" style="left:199px;top:762px">Qt6HttpServer.dll</div>
<div class="t gr" style="left:439px;top:762px">21/05/2023 1:50 a. m.</div>
<div class="t gr" style="left:583px;top:762px">Extensión de la ap...</div>
<div class="t gr sz" style="right:535px;top:762px">148 KB</div>
<div class="ic" style="left:181px;top:792px"><svg width="13" height="16" viewBox="0 0 13 16"><path d="M0.5 0.5 H8 L11.5 4 V15.5 H0.5Z" fill="#fff" stroke="#6b6b6b"/><path d="M8 0.5 V4 H11.5" fill="none" stroke="#6b6b6b"/><circle cx="4.6" cy="7" r="1.7" fill="none" stroke="#a3abb3" stroke-width="1.5"/><circle cx="7.3" cy="10.6" r="1.2" fill="none" stroke="#7d848c" stroke-width="1.2"/></svg></div>
<div class="t nm" style="left:199px;top:793px">Qt6LabsFolderListModel.dll</div>
<div class="t gr" style="left:439px;top:793px">21/05/2023 1:32 a. m.</div>
<div class="t gr" style="left:583px;top:793px">Extensión de la ap...</div>
<div class="t gr sz" style="right:535px;top:793px">101 KB</div>
    </div>
  </div>

  <!-- scrollbar -->
  <div class="abs" style="left:1287px;top:150px;width:15px;height:666px;background:#efefef"></div>
  <div class="abs" style="left:1294px;top:229px;width:2px;height:240px;background:#858585;border-radius:1px"></div>

  <!-- status bar -->
  <div class="t" style="left:15px;top:820px;font-size:11.5px;letter-spacing:0">54 elementos</div>
  <div class="sep" style="left:95px;top:822px;height:12px;background:#ebebeb"></div>
  <div class="t" style="left:106px;top:820px;font-size:11.5px;letter-spacing:0">1 elemento seleccionado</div>
  <div class="t" style="left:243px;top:820px;font-size:11.5px;letter-spacing:0">2,21 MB</div>
  <div class="sep" style="left:295px;top:822px;height:12px;background:#ebebeb"></div>

  
<svg class="abs" style="left:0;top:0" width="1304" height="840">
 <defs><filter id="sh" x="-50%" y="-50%" width="200%" height="200%"><feGaussianBlur stdDeviation="3"/></filter></defs>
 <path d="M170.8 334.6 L137.1 343.3 L145 349.6 L128.3 371.7 L145 384.6 L162 362.5 L171.25 369.2 Z" fill="#000" opacity="0.18" filter="url(#sh)" transform="translate(-2 3)"/>
 <path d="M170 335.5 L138.5 343.8 L146 349.8 L129.5 371.5 L145 383.5 L162 362 L170.5 368 Z" fill="#ff4343" fill-opacity="0.93" stroke="#3d3d3d" stroke-width="2" stroke-linejoin="round"/>
</svg>

  <!-- watermark + view buttons -->
  <svg class="abs" style="left:1230px;top:770px" width="74" height="70" viewBox="1230 770 74 70">
    <circle cx="1269.5" cy="806.5" r="25" fill="#fff" fill-opacity="0.8" stroke="#e3eaf0" stroke-width="1.5"/>
    <path d="M1270.5 816 C1268 811, 1256 813, 1253.8 801 C1252.5 791, 1261 785.5, 1270 785.3 C1278 785.3, 1283.5 790, 1282.5 797 C1281.5 803, 1278.5 806, 1279 810 C1279.3 813, 1278.5 815, 1277.5 816" fill="none" stroke="#3f9ded" stroke-width="2"/>
    <path d="M1270.5 816 C1268 811, 1256 813, 1253.8 801 C1252.5 791, 1261 785.5, 1270 785.3 C1278 785.3, 1283.5 790, 1282.5 797 C1281.5 803, 1278.5 806, 1279 810 C1279.3 813, 1278.5 815, 1277.5 816" fill="none" stroke="#8a8a8a" stroke-width="0.9" stroke-dasharray="1.5 1.5"/>
    <rect x="1255.5" y="816.5" width="21" height="23" fill="#dcedf9" stroke="#4ba6ea" stroke-width="1"/>
    <path d="M1261 823.5H1273M1261 826.5H1273M1261 829.5H1273" stroke="#6a6a6a" stroke-width="1"/>
    <path d="M1261 832.5H1273" stroke="#111" stroke-width="1"/>
    <path d="M1276.5 816.5 C1274 819, 1271 822, 1273 822.5 C1276 823, 1281 819, 1283.5 820 C1285 822, 1279 826, 1274 828" fill="none" stroke="#3f9ded" stroke-width="1.8"/>
    <rect x="1282.5" y="821.5" width="11" height="8.5" rx="0.8" fill="#fff" stroke="#111" stroke-width="1"/>
    <path d="M1282 832.5H1294" stroke="#111" stroke-width="1"/>
  </svg>
  <div id="frame"></div>
  <div class="abs" style="left:8px;top:839px;width:1288px;height:1px;background:linear-gradient(90deg,#7c7c7c,#6a6f78 60%,#1b2030)"></div>
  <div class="abs" style="left:1303px;top:760px;width:1px;height:72px;background:linear-gradient(180deg,#6f8694,#1b2030)"></div>
</div>
</body></html>
